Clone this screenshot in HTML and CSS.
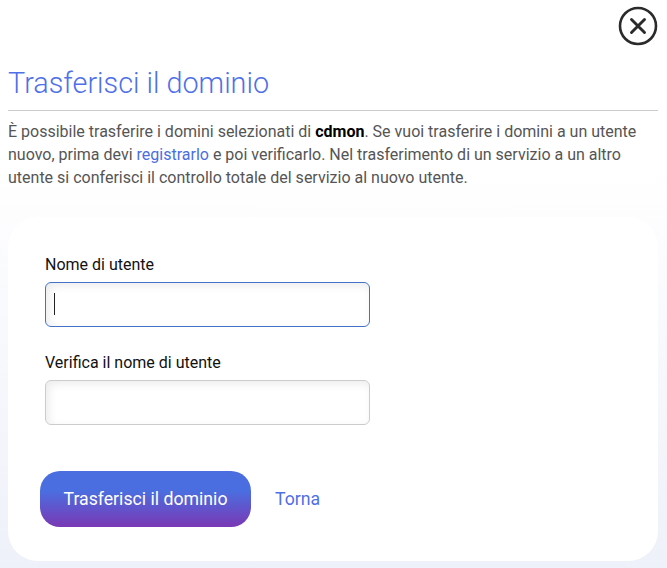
FILE: index.html
```html
<!DOCTYPE html>
<html lang="it">
<head>
  <meta charset="UTF-8" />
  <title>Trasferisci il dominio</title>
  <meta name="viewport" content="width=device-width, initial-scale=1.0">
  <link rel="stylesheet" href="styles.css">
</head>
<body>

  <div class="top-bar">
    <button class="close" aria-label="Chiudi">
      <svg width="40" height="40" viewBox="0 0 40 40" fill="none" stroke="#2b2b2b">
        <circle cx="20" cy="20" r="18" stroke-width="2.6" />
        <path d="M13.5 13.5 L26.5 26.5 M26.5 13.5 L13.5 26.5" stroke-width="2.9" stroke-linecap="round" />
      </svg>
    </button>
  </div>

  <h1>Trasferisci il dominio</h1>

  <p class="intro">
    È possibile trasferire i domini selezionati di <strong>cdmon</strong>. Se vuoi trasferire i domini a un utente
    nuovo, prima devi <a href="#">registrarlo</a> e poi verificarlo. Nel trasferimento di un servizio a un altro
    utente si conferisci il controllo totale del servizio al nuovo utente.
  </p>

  <form class="card">
    <div class="field">
      <label for="user">Nome di utente</label>
      <div class="input-wrap">
        <input type="text" id="user" class="active" />
        <span class="caret"></span>
      </div>
    </div>
    <div class="field">
      <label for="user2">Verifica il nome di utente</label>
      <div class="input-wrap">
        <input type="text" id="user2" />
      </div>
    </div>
    <div class="actions">
      <button type="button" class="submit">Trasferisci il dominio</button>
      <a href="#" class="back">Torna</a>
    </div>
  </form>

</body>
</html>
```

FILE: styles.css
```css
html {
  height: 100%;
}

body {
  font-family: Roboto, sans-serif;
  margin: 0;
  padding: 0 9px 7px 8px;
  min-height: 568px;
  box-sizing: border-box;
  background: linear-gradient(180deg, #ffffff 170px, #f9fafd 300px, #eef1f9 100%);
}

.top-bar {
  display: flex;
  justify-content: flex-end;
  padding-top: 6px;
  margin-right: -9px;
  padding-right: 9px;
}

.close {
  background: none;
  border: 0;
  padding: 0;
  width: 40px;
  height: 40px;
  cursor: pointer;
}

h1 {
  font-size: 28.8px;
  font-weight: 300;
  line-height: 36px;
  color: #4f70e6;
  margin: 19px 0 9px;
  padding-bottom: 9px;
  border-bottom: 1px solid #cccccc;
}

.intro {
  font-size: 16px;
  line-height: 23px;
  color: #555555;
  margin: 0 0 28px;
}

.intro strong {
  color: #000000;
}

.intro a {
  color: #4a6ee0;
  text-decoration: none;
}

.card {
  background: #ffffff;
  border-radius: 30px;
  padding: 38px 32px 34px;
}

.field {
  margin-bottom: 26px;
}

.field label {
  display: block;
  font-size: 16px;
  line-height: 20px;
  color: #111111;
  margin: 0 0 7px 5px;
}

.input-wrap {
  position: relative;
  margin-left: 5px;
  width: 325px;
}

.input-wrap input {
  display: block;
  width: 100%;
  height: 45px;
  box-sizing: border-box;
  border: 1px solid #cccccc;
  border-radius: 6px;
  background: #ffffff;
  box-shadow: inset 3px 3px 8px #00000014;
  outline: none;
}

.input-wrap input.active {
  border-color: #4472c8;
}

.caret {
  position: absolute;
  left: 9px;
  top: 11px;
  width: 1px;
  height: 22px;
  background: #222222;
}

.actions {
  display: flex;
  align-items: center;
  gap: 24px;
  margin-top: 46px;
}

.submit {
  font-family: Roboto, sans-serif;
  font-size: 17.7px;
  color: #ffffff;
  height: 56px;
  width: 211px;
  border: 0;
  border-radius: 20px;
  background: linear-gradient(180deg, #4a6ee0 0%, #4a6ee0 35%, #7a38b4 100%);
  cursor: pointer;
}

.back {
  font-size: 17.7px;
  color: #4f70e6;
  text-decoration: none;
}
```
